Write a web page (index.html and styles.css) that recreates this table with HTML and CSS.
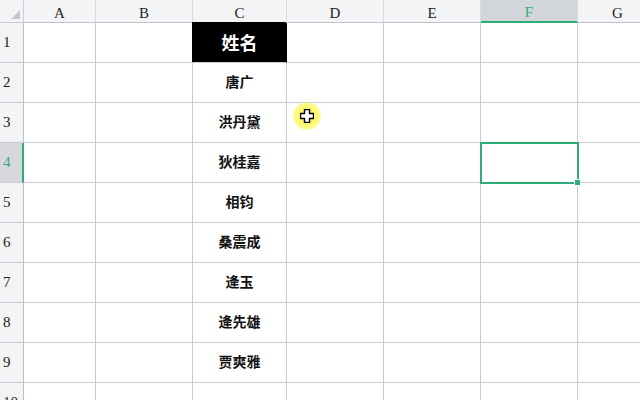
FILE: index.html
```html
<!DOCTYPE html>
<html lang="zh">
<head>
<meta charset="utf-8">
<title>Sheet</title>
<link rel="stylesheet" href="styles.css">
</head>
<body>
<div class="sheet">
  <div class="corner"><span class="tri"></span></div>
  <div class="colhead">A</div>
  <div class="colhead">B</div>
  <div class="colhead">C</div>
  <div class="colhead">D</div>
  <div class="colhead">E</div>
  <div class="colhead sel">F</div>
  <div class="colhead">G</div>

  <div class="rowhead">1</div><div class="cell"></div><div class="cell"></div><div class="cell title">姓名</div><div class="cell"></div><div class="cell"></div><div class="cell"></div><div class="cell"></div>
  <div class="rowhead">2</div><div class="cell"></div><div class="cell"></div><div class="cell name">唐广</div><div class="cell"></div><div class="cell"></div><div class="cell"></div><div class="cell"></div>
  <div class="rowhead">3</div><div class="cell"></div><div class="cell"></div><div class="cell name">洪丹黛</div><div class="cell cursor-host"><span class="cursor"><span class="halo"></span><svg class="plus" width="14" height="14" viewBox="0 0 14 14"><path d="M4.5 0.5h5v4h4v5h-4v4h-5v-4h-4v-5h4z" fill="#fff" stroke="#000" stroke-width="1.4" stroke-linejoin="round"/></svg></span></div><div class="cell"></div><div class="cell"></div><div class="cell"></div>
  <div class="rowhead sel">4</div><div class="cell"></div><div class="cell"></div><div class="cell name">狄桂嘉</div><div class="cell"></div><div class="cell"></div><div class="cell active"><span class="selbox"><span class="handle"></span></span></div><div class="cell"></div>
  <div class="rowhead">5</div><div class="cell"></div><div class="cell"></div><div class="cell name">相钧</div><div class="cell"></div><div class="cell"></div><div class="cell"></div><div class="cell"></div>
  <div class="rowhead">6</div><div class="cell"></div><div class="cell"></div><div class="cell name">桑震成</div><div class="cell"></div><div class="cell"></div><div class="cell"></div><div class="cell"></div>
  <div class="rowhead">7</div><div class="cell"></div><div class="cell"></div><div class="cell name">逄玉</div><div class="cell"></div><div class="cell"></div><div class="cell"></div><div class="cell"></div>
  <div class="rowhead">8</div><div class="cell"></div><div class="cell"></div><div class="cell name">逄先雄</div><div class="cell"></div><div class="cell"></div><div class="cell"></div><div class="cell"></div>
  <div class="rowhead">9</div><div class="cell"></div><div class="cell"></div><div class="cell name">贾爽雅</div><div class="cell"></div><div class="cell"></div><div class="cell"></div><div class="cell"></div>
  <div class="rowhead">10</div><div class="cell"></div><div class="cell"></div><div class="cell"></div><div class="cell"></div><div class="cell"></div><div class="cell"></div><div class="cell"></div>
</div>
</body>
</html>
```

FILE: styles.css
```css
html, body {
  margin: 0;
  padding: 0;
  width: 640px;
  height: 400px;
  overflow: hidden;
  background: #fff;
}

.sheet {
  display: grid;
  grid-template-columns: 24px 72px 97px 94px 97px 97px 97px 80px;
  grid-template-rows: 23px repeat(10, 40px);
  font-family: "Noto Sans CJK SC", "Noto Sans", sans-serif;
}

.sheet > div {
  box-sizing: border-box;
  border-right: 1px solid #cbcbd8;
  border-bottom: 1px solid #cbcbd8;
}

.corner {
  position: relative;
  background: #f3f4f6;
}

.tri {
  position: absolute;
  right: 3px;
  bottom: 3px;
  width: 0;
  height: 0;
  border-left: 9px solid transparent;
  border-bottom: 9px solid #c4c6ca;
}

.colhead {
  background: #f3f4f6;
  border-right-color: #dadbe2 !important;
  border-bottom-color: #bfc0cc !important;
  font-family: "Liberation Serif", "DejaVu Serif", serif;
  font-size: 15px;
  color: #222;
  display: flex;
  align-items: flex-end;
  justify-content: center;
  padding-bottom: 0;
  line-height: 18px;
}

.colhead.sel {
  background: #d2d5da;
  color: #2fad78;
  border-bottom: 2px solid #2fad78 !important;
  padding-bottom: 0;
}

.rowhead {
  background: #f3f4f6;
  border-right-color: #bfc0cc !important;
  font-family: "Liberation Serif", "DejaVu Serif", serif;
  font-size: 15px;
  color: #222;
  display: flex;
  align-items: center;
  padding-left: 3px;
}

.rowhead.sel {
  background: #d6d8dd;
  color: #2fad78;
  border-right: 2px solid #2fad78 !important;
}

.cell {
  position: relative;
}

.name {
  display: flex;
  align-items: center;
  justify-content: center;
  padding-bottom: 3px;
  font-size: 14px;
  font-weight: 700;
  color: #111;
}

.title {
  display: flex;
  align-items: center;
  justify-content: center;
  padding-bottom: 2px;
  background: #000;
  color: #fff;
  font-size: 18px;
  font-weight: 700;
  border-right-color: #000 !important;
  box-shadow: -1px -1px 0 #000;
}

.selbox {
  position: absolute;
  left: -1px;
  top: -1px;
  right: -2px;
  bottom: -2px;
  border: 2px solid #2fad78;
  z-index: 2;
}

.handle {
  position: absolute;
  right: -4px;
  bottom: -4px;
  width: 5px;
  height: 5px;
  background: #2fad78;
  border: 1px solid #fff;
}

.cursor {
  position: absolute;
  left: 6px;
  top: -1px;
  width: 28px;
  height: 28px;
  z-index: 3;
}

.halo {
  position: absolute;
  inset: 0;
  border-radius: 50%;
  background: radial-gradient(circle, rgba(250,245,60,0.95) 0%, rgba(250,245,80,0.8) 50%, rgba(255,250,150,0) 100%);
}

.plus {
  position: absolute;
  left: 7px;
  top: 7px;
}
```
